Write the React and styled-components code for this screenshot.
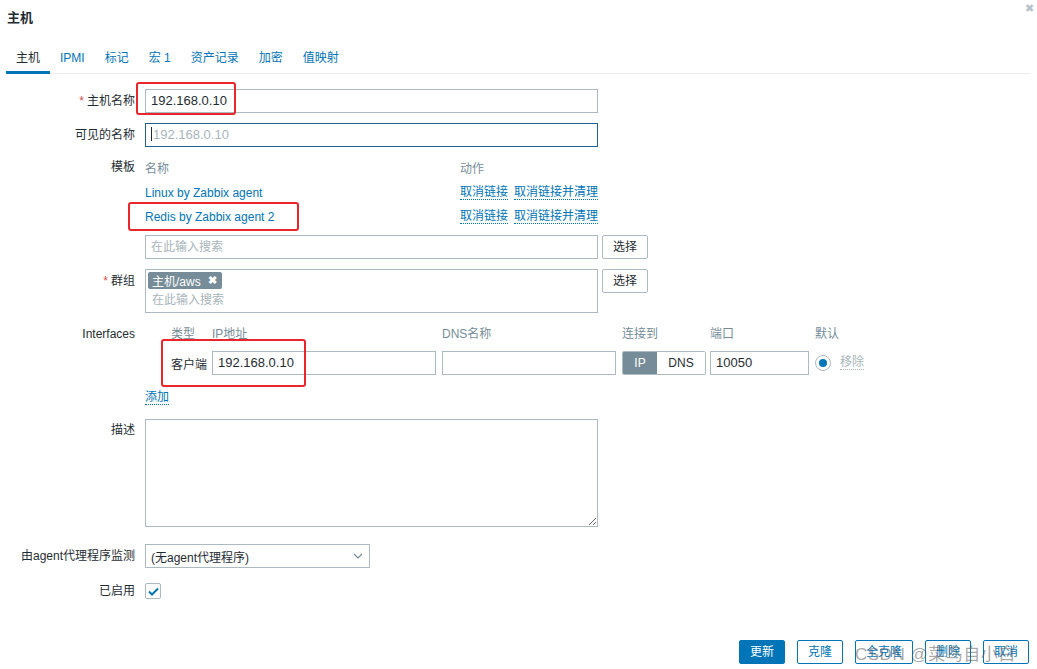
import React from 'react';
import styled, { createGlobalStyle } from 'styled-components';

const GlobalStyle = createGlobalStyle`
	html, body {
		margin: 0;
		padding: 0;
		background: #fff;
	}
	body {
		font-family: "Liberation Sans", Arial, "Noto Sans CJK SC", sans-serif;
		font-size: 12px;
		color: #1f2c33;
	}
	* { box-sizing: border-box; }
`;

const Page = styled.div`
	position: relative;
	width: 1037px;
	height: 669px;
	overflow: hidden;
	background: #fff;
`;

const Header = styled.div`
	display: flex;
	justify-content: space-between;
	align-items: flex-start;
	height: 40px;
	padding: 10px 3px 0 7px;
`;

const Title = styled.h4`
	margin: 0;
	font-size: 13px;
	font-weight: bold;
	line-height: 16px;
`;

const Close = styled.span`
	margin-top: -7px;
	color: #b5c2c8;
	font-size: 11px;
	line-height: 11px;
`;

const TabBar = styled.div`
	display: flex;
	margin: 0 7px 0 6px;
	height: 34px;
	border-bottom: 1px solid #ebeef0;
`;

const Tab = styled.div`
	padding: 10px 10px 0;
	height: 34px;
	line-height: 16px;
	color: ${p => (p.$active ? '#1f2c33' : '#0275b8')};
	border-bottom: 3px solid ${p => (p.$active ? '#0275b8' : 'transparent')};
`;

const Form = styled.div`
	padding-top: 15px;
`;

const Row = styled.div`
	display: grid;
	grid-template-columns: 135px 1fr;
	column-gap: 10px;
	margin-top: ${p => p.$mt || 0}px;
`;

const Label = styled.label`
	text-align: right;
	line-height: ${p => p.$lh || 24}px;
	white-space: nowrap;
`;

const Star = styled.span`
	color: #d64e4e;
	margin-right: 3px;
`;

const TextInput = styled.div`
	width: ${p => p.$w || 453}px;
	height: 24px;
	border: 1px solid ${p => (p.$focus ? '#1f5f92' : '#acbbc2')};
	padding: 0 5px;
	line-height: 22px;
	font-size: ${p => p.$fs || 13}px;
	color: ${p => (p.$placeholder ? '#a8b5bb' : '#1f2c33')};
	background: #fff;
	white-space: nowrap;
	overflow: hidden;
`;

const Caret = styled.span`
	display: inline-block;
	width: 1px;
	height: 14px;
	background: #1f2c33;
	vertical-align: -2px;
	margin-right: 1px;
`;

const Stack = styled.div`
	display: flex;
	flex-direction: column;
`;

const TplRow = styled.div`
	display: grid;
	grid-template-columns: 315px auto;
	height: ${p => p.$h || 24}px;
	align-items: center;
`;

const Muted = styled.span`
	color: #768d99;
`;

const Link = styled.span`
	color: #0275b8;
`;

const Actions = styled.div`
	display: flex;
	gap: 6px;
`;

const DotLink = styled.span`
	color: #0275b8;
	border-bottom: 1px dotted #0275b8;
	line-height: 13px;
`;

const InputWithButton = styled.div`
	display: flex;
	gap: 4px;
	align-items: flex-start;
	margin-top: ${p => p.$mt || 0}px;
`;

const Button = styled.button`
	height: 24px;
	padding: 0 10px;
	border: 1px solid ${p => (p.$blue ? '#0275b8' : '#acbbc2')};
	border-radius: 2px;
	background: ${p => (p.$primary ? '#0275b8' : '#fff')};
	color: ${p => (p.$primary ? '#fff' : p.$blue ? '#0275b8' : '#1f2c33')};
	font-family: inherit;
	font-size: 12px;
	line-height: 22px;
	cursor: pointer;
`;

const MultiBox = styled.div`
	width: 453px;
	height: 44px;
	border: 1px solid #acbbc2;
	padding: 2px 2px;
`;

const Tag = styled.span`
	display: inline-flex;
	align-items: center;
	gap: 7px;
	height: 17px;
	padding: 0 5px 0 4px;
	background: #768d99;
	color: #fff;
	font-size: 12px;
	border-radius: 2px;
`;

const TagX = styled.span`
	font-size: 11px;
	font-weight: bold;
`;

const Placeholder = styled.div`
	color: #a8b5bb;
	padding-left: 4px;
	margin-top: 3px;
	line-height: 16px;
`;

const IfGrid = styled.div`
	display: grid;
	grid-template-columns: 26px 41px 230px 180px 88px 105px 25px auto;
	align-items: center;
	row-gap: 6px;
`;

const IfHead = styled.div`
	color: #768d99;
	line-height: 22px;
`;

const Toggle = styled.div`
	display: flex;
	width: 84px;
	height: 24px;
	border: 1px solid #acbbc2;
	border-radius: 2px;
	overflow: hidden;
`;

const ToggleItem = styled.div`
	flex: ${p => (p.$active ? '0 0 34px' : '1')};
	display: flex;
	align-items: center;
	justify-content: center;
	background: ${p => (p.$active ? '#768d99' : '#fff')};
	color: ${p => (p.$active ? '#fff' : '#1f2c33')};
`;

const Radio = styled.span`
	display: inline-flex;
	align-items: center;
	justify-content: center;
	width: 16px;
	height: 16px;
	border: 1px solid #acbbc2;
	border-radius: 50%;
	&::after {
		content: '';
		width: 8px;
		height: 8px;
		border-radius: 50%;
		background: #0275b8;
	}
`;

const Remove = styled.span`
	color: #a8b5bb;
	border-bottom: 1px dotted #a8b5bb;
	line-height: 13px;
	justify-self: start;
`;

const AddLink = styled.div`
	margin-top: 14px;
	line-height: 16px;
	span {
		color: #0275b8;
		border-bottom: 1px dotted #0275b8;
	}
`;

const TextArea = styled.textarea`
	display: block;
	width: 453px;
	height: 108px;
	border: 1px solid #acbbc2;
	resize: both;
	margin: 0;
	font-family: inherit;
`;

const Select = styled.div`
	display: flex;
	align-items: center;
	justify-content: space-between;
	width: 225px;
	height: 24px;
	border: 1px solid #acbbc2;
	padding: 0 6px 0 5px;
	font-size: 12px;
`;

const CheckBox = styled.span`
	display: flex;
	align-items: center;
	justify-content: center;
	width: 16px;
	height: 16px;
	border: 1px solid #acbbc2;
	border-radius: 2px;
	margin-top: 1px;
`;

const Footer = styled.div`
	position: absolute;
	left: 0;
	right: 8px;
	bottom: 5px;
	display: flex;
	justify-content: flex-end;
	gap: 12px;
`;

const RedBox = styled.div`
	position: absolute;
	border: 2px solid #e8262b;
	border-radius: 3px;
	pointer-events: none;
`;

const Watermark = styled.div`
	position: absolute;
	left: 855px;
	top: 640px;
	font-size: 17px;
	letter-spacing: 0.5px;
	color: rgba(90, 90, 90, 0.55);
	pointer-events: none;
	white-space: nowrap;
`;

const tabs = ['主机', 'IPMI', '标记', '宏 1', '资产记录', '加密', '值映射'];
const templates = ['Linux by Zabbix agent', 'Redis by Zabbix agent 2'];

const App = () => (
	<Page>
		<GlobalStyle />
		<Header>
			<Title>主机</Title>
			<Close>✖</Close>
		</Header>
		<TabBar>
			{tabs.map((t, i) => (
				<Tab key={t} $active={i === 0}>{t}</Tab>
			))}
		</TabBar>
		<Form>
			<Row>
				<Label><Star>*</Star>主机名称</Label>
				<TextInput>192.168.0.10</TextInput>
			</Row>
			<Row $mt={10}>
				<Label>可见的名称</Label>
				<TextInput $focus $placeholder><Caret />192.168.0.10</TextInput>
			</Row>
			<Row $mt={10}>
				<Label $lh={20}>模板</Label>
				<Stack>
					<TplRow $h={20}>
						<Muted>名称</Muted>
						<Muted>动作</Muted>
					</TplRow>
					<TplRow $h={4} />
					{templates.map(t => (
						<TplRow key={t}>
							<Link>{t}</Link>
							<Actions>
								<DotLink>取消链接</DotLink>
								<DotLink>取消链接并清理</DotLink>
							</Actions>
						</TplRow>
					))}
					<InputWithButton $mt={6}>
						<TextInput $placeholder $fs={12}>在此输入搜索</TextInput>
						<Button>选择</Button>
					</InputWithButton>
				</Stack>
			</Row>
			<Row $mt={10}>
				<Label><Star>*</Star>群组</Label>
				<InputWithButton>
					<MultiBox>
						<Tag>主机/aws<TagX>✖</TagX></Tag>
						<Placeholder>在此输入搜索</Placeholder>
					</MultiBox>
					<Button>选择</Button>
				</InputWithButton>
			</Row>
			<Row $mt={10}>
				<Label $lh={22}>Interfaces</Label>
				<Stack>
					<IfGrid>
						<span />
						<IfHead>类型</IfHead>
						<IfHead>IP地址</IfHead>
						<IfHead>DNS名称</IfHead>
						<IfHead>连接到</IfHead>
						<IfHead>端口</IfHead>
						<IfHead>默认</IfHead>
						<span />
						<span />
						<span>客户端</span>
						<TextInput $w={224}>192.168.0.10</TextInput>
						<TextInput $w={174} />
						<Toggle>
							<ToggleItem $active>IP</ToggleItem>
							<ToggleItem>DNS</ToggleItem>
						</Toggle>
						<TextInput $w={99}>10050</TextInput>
						<Radio />
						<Remove>移除</Remove>
					</IfGrid>
					<AddLink><span>添加</span></AddLink>
				</Stack>
			</Row>
			<Row $mt={14}>
				<Label $lh={22}>描述</Label>
				<TextArea />
			</Row>
			<Row $mt={17}>
				<Label>由agent代理程序监测</Label>
				<Select>
					<span>(无agent代理程序)</span>
					<svg width="10" height="6" viewBox="0 0 10 6">
						<path d="M1 1l4 4 4-4" fill="none" stroke="#768d99" strokeWidth="1.2" />
					</svg>
				</Select>
			</Row>
			<Row $mt={14}>
				<Label $lh={18}>已启用</Label>
				<CheckBox>
					<svg width="11" height="9" viewBox="0 0 11 9">
						<path d="M1 4.5l3 3 6-6" fill="none" stroke="#0275b8" strokeWidth="2" />
					</svg>
				</CheckBox>
			</Row>
		</Form>
		<Footer>
			<Button $primary $blue>更新</Button>
			<Button $blue>克隆</Button>
			<Button $blue>全克隆</Button>
			<Button $blue>删除</Button>
			<Button $blue>取消</Button>
		</Footer>
		<RedBox style={{ left: 136, top: 82, width: 100, height: 33 }} />
		<RedBox style={{ left: 128, top: 202, width: 171, height: 29 }} />
		<RedBox style={{ left: 161, top: 339, width: 145, height: 48 }} />
		<Watermark>CSDN @菜鸟自小白</Watermark>
	</Page>
);

export default App;
